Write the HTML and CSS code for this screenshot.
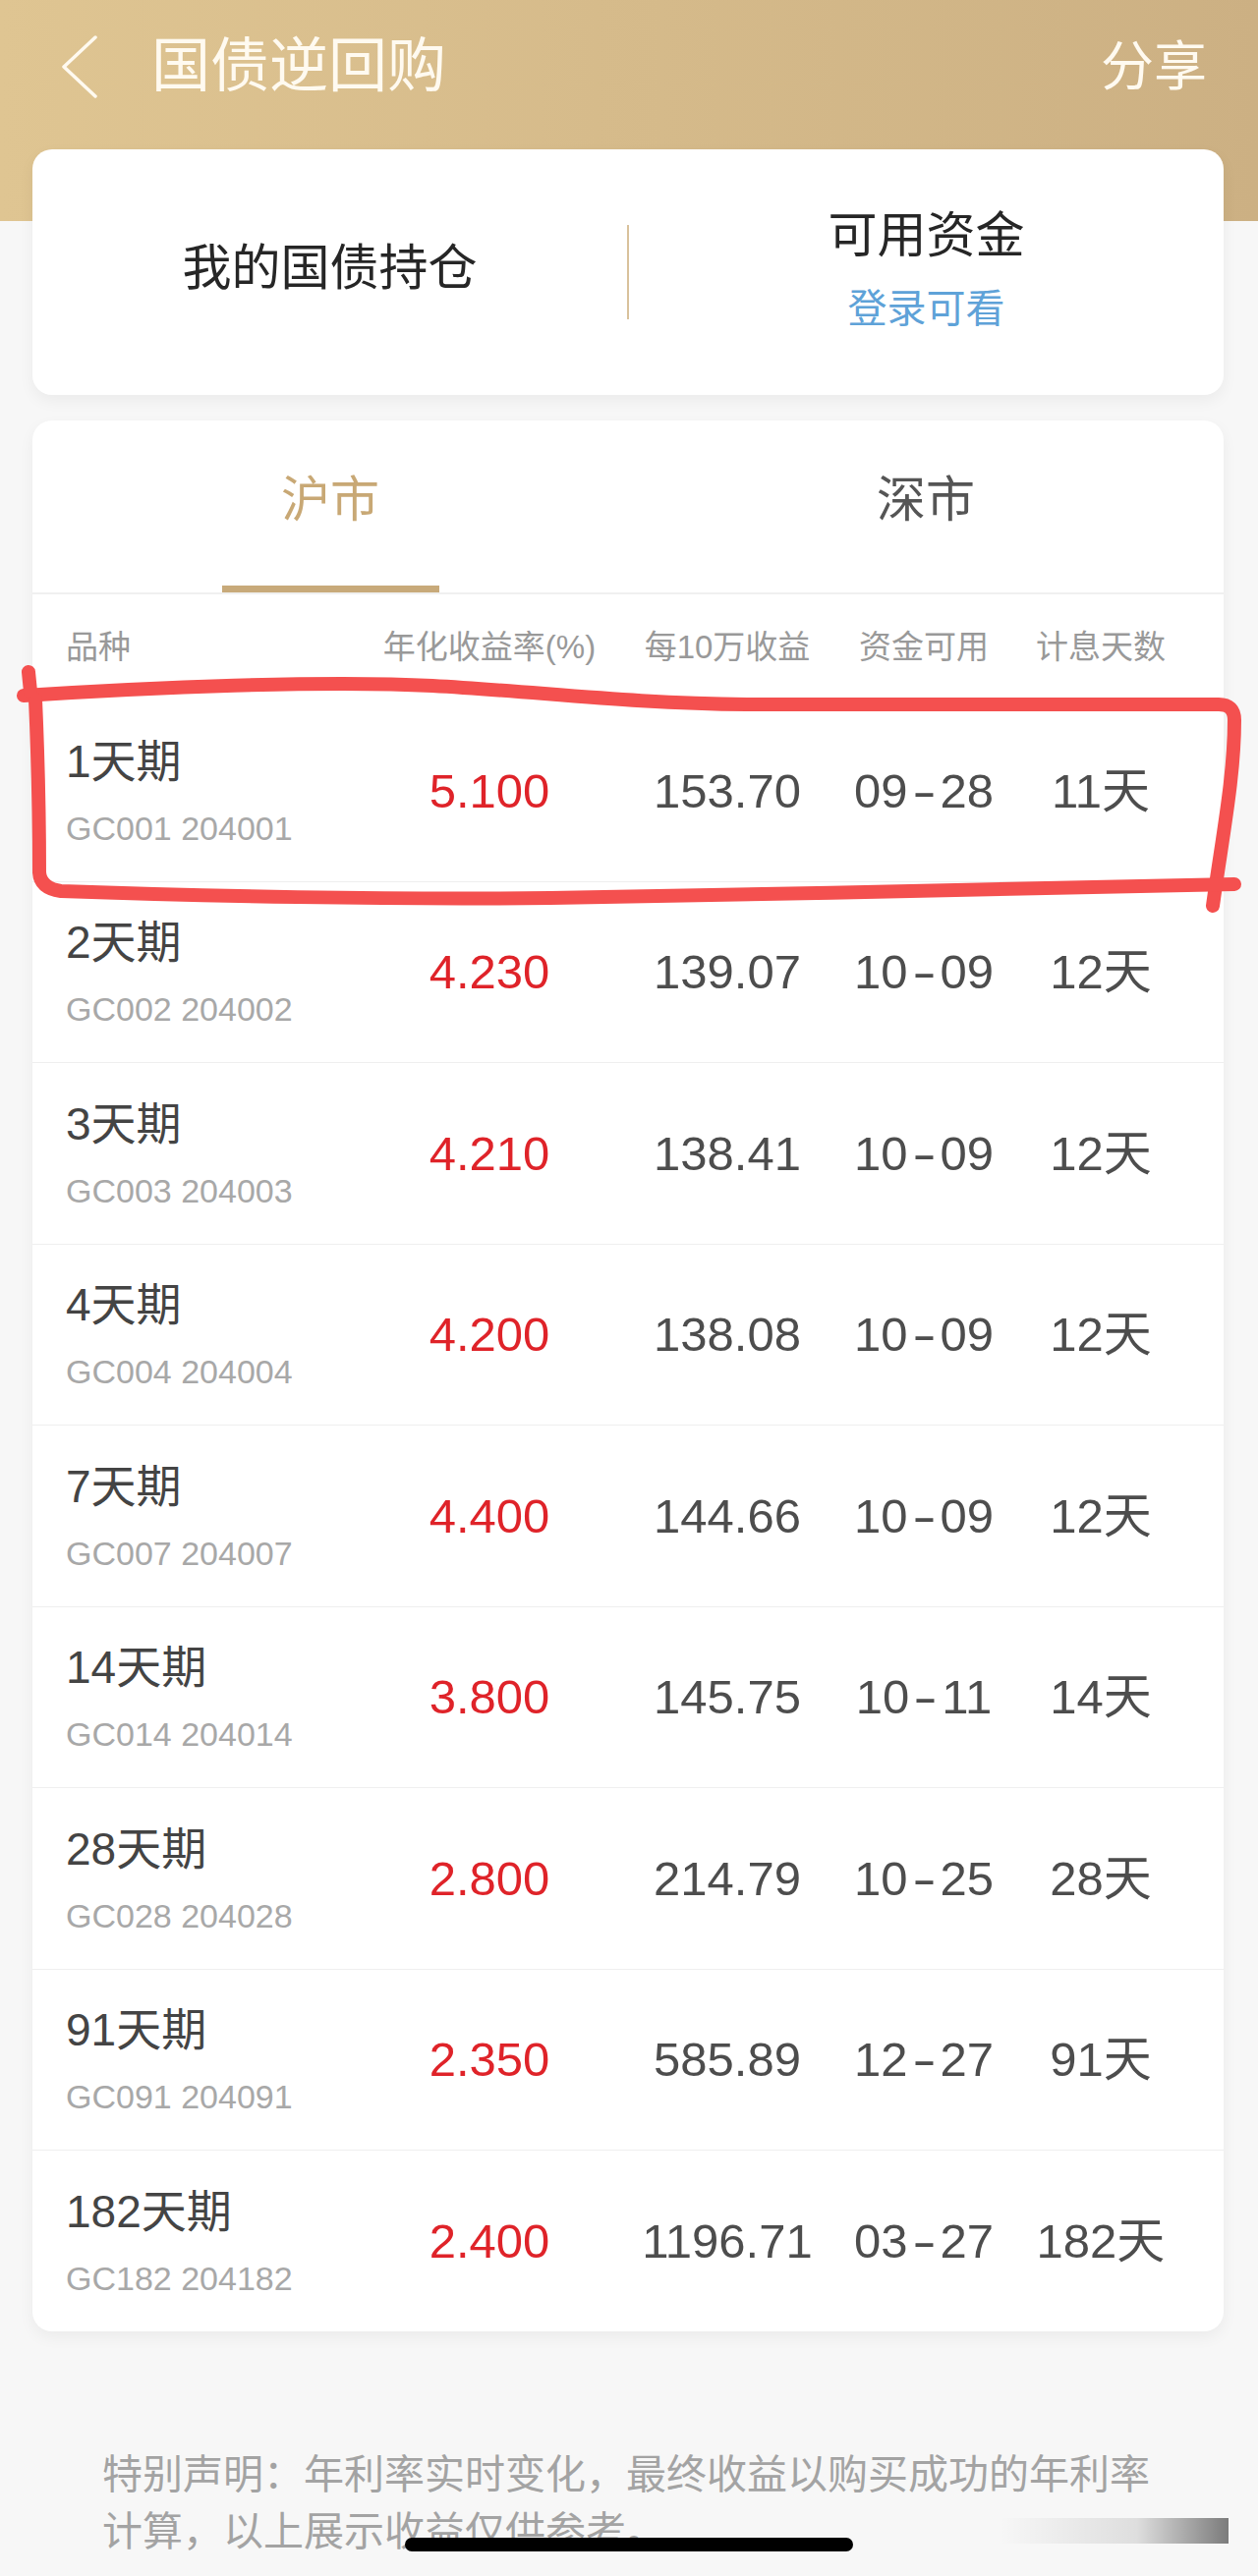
FILE: index.html
```html
<!DOCTYPE html>
<html lang="zh-CN">
<head>
    <meta charset="UTF-8">
    <meta name="viewport" content="width=device-width, initial-scale=1.0">
    <title>国债逆回购</title>
    <link rel="stylesheet" href="styles.css">
</head>
<body>
<div class="page">
    <header class="nav">
        <svg class="back" width="40" height="64" viewBox="0 0 40 64">
            <polyline points="35,2 3,32 35,62" fill="none" stroke="#fffaf0" stroke-width="3.5" stroke-linecap="round" stroke-linejoin="round"/>
        </svg>
        <h1 class="nav-title">国债逆回购</h1>
        <span class="nav-share">分享</span>
    </header>

    <section class="card summary">
        <div class="summary-item">
            <div class="summary-title">我的国债持仓</div>
        </div>
        <div class="summary-divider"></div>
        <div class="summary-item">
            <div class="summary-title">可用资金</div>
            <div class="summary-link">登录可看</div>
        </div>
    </section>

    <section class="card market">
        <div class="tabs">
            <div class="tab active">沪市</div>
            <div class="tab">深市</div>
        </div>

        <div class="row head">
            <div class="cell first">品种</div>
            <div class="cell">年化收益率(%)</div>
            <div class="cell">每10万收益</div>
            <div class="cell">资金可用</div>
            <div class="cell">计息天数</div>
        </div>

        <div class="row">
            <div class="cell first"><div class="name">1天期</div><div class="code">GC001 204001</div></div>
            <div class="cell rate">5.100</div>
            <div class="cell val">153.70</div>
            <div class="cell val">09<span class="dash">-</span>28</div>
            <div class="cell val">11天</div>
        </div>
        <div class="row">
            <div class="cell first"><div class="name">2天期</div><div class="code">GC002 204002</div></div>
            <div class="cell rate">4.230</div>
            <div class="cell val">139.07</div>
            <div class="cell val">10<span class="dash">-</span>09</div>
            <div class="cell val">12天</div>
        </div>
        <div class="row">
            <div class="cell first"><div class="name">3天期</div><div class="code">GC003 204003</div></div>
            <div class="cell rate">4.210</div>
            <div class="cell val">138.41</div>
            <div class="cell val">10<span class="dash">-</span>09</div>
            <div class="cell val">12天</div>
        </div>
        <div class="row">
            <div class="cell first"><div class="name">4天期</div><div class="code">GC004 204004</div></div>
            <div class="cell rate">4.200</div>
            <div class="cell val">138.08</div>
            <div class="cell val">10<span class="dash">-</span>09</div>
            <div class="cell val">12天</div>
        </div>
        <div class="row">
            <div class="cell first"><div class="name">7天期</div><div class="code">GC007 204007</div></div>
            <div class="cell rate">4.400</div>
            <div class="cell val">144.66</div>
            <div class="cell val">10<span class="dash">-</span>09</div>
            <div class="cell val">12天</div>
        </div>
        <div class="row">
            <div class="cell first"><div class="name">14天期</div><div class="code">GC014 204014</div></div>
            <div class="cell rate">3.800</div>
            <div class="cell val">145.75</div>
            <div class="cell val">10<span class="dash">-</span>11</div>
            <div class="cell val">14天</div>
        </div>
        <div class="row">
            <div class="cell first"><div class="name">28天期</div><div class="code">GC028 204028</div></div>
            <div class="cell rate">2.800</div>
            <div class="cell val">214.79</div>
            <div class="cell val">10<span class="dash">-</span>25</div>
            <div class="cell val">28天</div>
        </div>
        <div class="row">
            <div class="cell first"><div class="name">91天期</div><div class="code">GC091 204091</div></div>
            <div class="cell rate">2.350</div>
            <div class="cell val">585.89</div>
            <div class="cell val">12<span class="dash">-</span>27</div>
            <div class="cell val">91天</div>
        </div>
        <div class="row">
            <div class="cell first"><div class="name">182天期</div><div class="code">GC182 204182</div></div>
            <div class="cell rate">2.400</div>
            <div class="cell val">1196.71</div>
            <div class="cell val">03<span class="dash">-</span>27</div>
            <div class="cell val">182天</div>
        </div>
    </section>

    <p class="notice">特别声明：年利率实时变化，最终收益以购买成功的年利率计算，以上展示收益仅供参考。</p>

    <!-- red hand-drawn mark around the first row -->
    <svg class="mark" width="1280" height="960" viewBox="0 0 1280 960">
        <g fill="none" stroke="#f4504f" stroke-width="14" stroke-linecap="round" stroke-linejoin="round">
            <path d="M24 708 C150 700 330 692 440 698 S640 716 760 717 L1240 717 Q1256 717 1256 733 C1256 790 1244 850 1234 922"/>
            <path d="M29 684 L31 704 M36 712 C39 780 40 850 40 888 Q41 904 62 907 C200 912 400 916 560 914 C800 911 1000 904 1256 900"/>
        </g>
    </svg>

    <div class="smudge"></div>
    <div class="home-bar"></div>
</div>
</body>
</html>
```

FILE: styles.css
```css
body {
    margin: 0;
    font-family: "Liberation Sans", "Noto Sans CJK SC", sans-serif;
    background: linear-gradient(90deg, #dfc592, #ccb083) top left / 100% 225px no-repeat, #f7f7f7;
    color: #333;
}

.page {
    position: relative;
    height: 2622px;
    overflow: hidden;
}

/* top bar */
.nav {
    display: flex;
    align-items: center;
    height: 136px;
    padding: 0 52px 0 62px;
    color: #fffaf0;
}

.nav-title {
    margin: 0 0 0 52px;
    font-size: 60px;
    font-weight: normal;
    line-height: 1;
}

.nav-share {
    margin-left: auto;
    font-size: 54px;
    line-height: 1;
}

.card {
    background: #fff;
    border-radius: 20px;
    box-shadow: 0 6px 16px rgba(0, 0, 0, 0.05);
}

/* holdings card */
.summary {
    display: flex;
    align-items: center;
    height: 250px;
    margin: 16px 35px 0 33px;
}

.summary-item {
    flex: 1;
    display: flex;
    flex-direction: column;
    align-items: center;
    padding-bottom: 8px;
}

.summary-title {
    font-size: 50px;
    line-height: 60px;
    color: #262626;
}

.summary-link {
    margin-top: 22px;
    font-size: 40px;
    line-height: 44px;
    color: #5ea2d8;
}

.summary-divider {
    width: 2px;
    height: 96px;
    background: #d9c29c;
}

/* market card */
.market {
    margin: 26px 35px 0 33px;
    overflow: hidden;
}

.tabs {
    display: flex;
    border-bottom: 2px solid #f0f0f0;
}

.tab {
    flex: 1;
    display: flex;
    flex-direction: column;
    align-items: center;
    padding-top: 51px;
    font-size: 50px;
    line-height: 60px;
    color: #555;
}

.tab::after {
    content: "";
    width: 221px;
    height: 7px;
    margin-top: 57px;
}

.tab.active {
    color: #c8a875;
}

.tab.active::after {
    background: #c8aa7a;
}

.row {
    display: grid;
    grid-template-columns: 331px 200px 284px 116px 244px;
    align-items: center;
    height: 183.5px;
    padding-left: 34px;
    border-bottom: 1px solid #efefef;
}

.row:last-child {
    border-bottom: none;
}

.row.head {
    height: 108px;
    border-bottom: none;
    font-size: 33px;
    line-height: 44px;
    color: #999;
}

.cell {
    display: flex;
    justify-content: center;
    white-space: nowrap;
}

.cell.first {
    flex-direction: column;
    justify-content: flex-start;
}

.name {
    font-size: 46px;
    line-height: 60px;
    color: #444;
}

.code {
    margin-top: 16px;
    font-size: 34px;
    line-height: 44px;
    color: #a8a8a8;
}

.rate {
    font-size: 49px;
    line-height: 60px;
    color: #df2329;
}

.val {
    font-size: 49px;
    line-height: 60px;
    color: #4d4d4d;
}

.dash {
    flex-shrink: 0;
    display: inline-block;
    width: 33px;
    text-align: center;
    transform: scaleX(1.5);
}

.notice {
    margin: 117px 96px 0 104px;
    font-size: 41px;
    line-height: 58px;
    color: #a3a3a3;
}

.mark {
    position: absolute;
    top: 0;
    left: 0;
    pointer-events: none;
}

.smudge {
    position: absolute;
    left: 1017px;
    top: 2563px;
    width: 233px;
    height: 26px;
    background: linear-gradient(90deg, rgba(0, 0, 0, 0), rgba(0, 0, 0, 0.1) 60%, rgba(0, 0, 0, 0.5));
}

.home-bar {
    position: absolute;
    left: 412px;
    top: 2583px;
    width: 456px;
    height: 14px;
    border-radius: 7px;
    background: #000;
}
```
